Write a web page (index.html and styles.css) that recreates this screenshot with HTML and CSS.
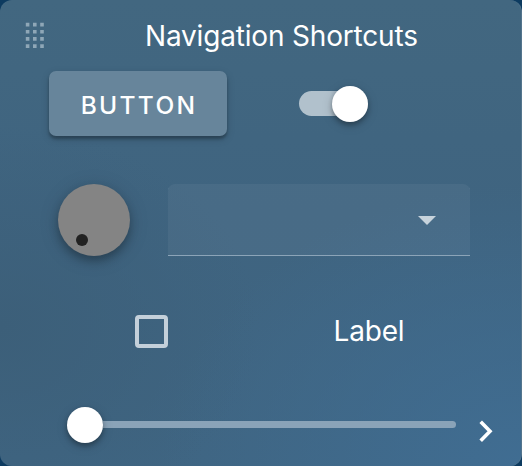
FILE: index.html
```html
<!DOCTYPE html>
<html lang="en">
<head>
<meta charset="utf-8">
<title>Navigation Shortcuts</title>
<link rel="stylesheet" href="styles.css">
</head>
<body>
<main class="card">
  <header class="header">
    <svg class="grip" width="20" height="27" viewBox="0 0 20 27" fill="currentColor">
      <path d="M.8 .8h3.6v3.6H.8zM8 .8h3.6v3.6H8zM15.2 .8h3.6v3.6h-3.6zM.8 7.9h3.6v3.6H.8zM8 7.9h3.6v3.6H8zM15.2 7.9h3.6v3.6h-3.6zM.8 15.1h3.6v3.6H.8zM8 15.1h3.6v3.6H8zM15.2 15.1h3.6v3.6h-3.6zM.8 22.3h3.6v3.6H.8zM8 22.3h3.6v3.6H8zM15.2 22.3h3.6v3.6h-3.6z"/>
    </svg>
    <h1 class="title">Navigation Shortcuts</h1>
  </header>
  <section class="row actions">
    <button class="button" type="button">BUTTON</button>
    <div class="switch"><span class="thumb"></span></div>
  </section>
  <section class="row inputs">
    <div class="knob"><span class="knob-dot"></span></div>
    <div class="select">
      <svg width="18" height="9" viewBox="0 0 18 9" fill="currentColor"><path d="M0 0h18L9 9z"/></svg>
    </div>
  </section>
  <section class="row options">
    <span class="checkbox"></span>
    <span class="label">Label</span>
  </section>
  <section class="row range">
    <div class="slider"><span class="thumb"></span><span class="track"></span></div>
    <svg class="chevron" width="14" height="23" viewBox="0 0 14 23" fill="none" stroke="currentColor" stroke-width="3.6"><path d="M1.7 1.7l9.3 9.5-9.3 9.5"/></svg>
  </section>
</main>
</body>
</html>
```
FILE: styles.css
```css
* { box-sizing: border-box; }
body {
  margin: 0;
  background: #0d3b60;
  color: #fff;
  font-family: Inter, "Liberation Sans", sans-serif;
}
.card {
  width: 522px;
  height: 466px;
  overflow: hidden;
  border-radius: 12px;
  border-right: 1px solid #54758d;
  background:
    radial-gradient(ellipse 360px 280px at 100% 100%, #406d92 0%, rgba(64, 109, 146, 0) 100%),
    radial-gradient(ellipse 260px 200px at 0 70%, #3c5f79 0%, rgba(60, 95, 121, 0) 100%),
    linear-gradient(#426780, #3f6480 45%, #3f6582);
}
.header {
  display: flex;
  align-items: flex-start;
  height: 71px;
  padding: 22px 0 0 25px;
}
.grip { color: #8fa7b7; }
.title {
  margin: -4px 0 0 100px;
  font-size: 28px;
  font-weight: 400;
  line-height: 36px;
  letter-spacing: -.18px;
  white-space: nowrap;
}
.row { display: flex; align-items: center; }
.actions { height: 65px; padding-left: 49px; gap: 72px; }
.button {
  width: 178px;
  height: 65px;
  padding: 2px 0 0 2px;
  border: 0;
  border-radius: 7px;
  background: #67859b;
  color: #fff;
  font: 500 24.5px/30px Inter, sans-serif;
  letter-spacing: 2.3px;
  box-shadow: 0 3px 3px rgba(0, 0, 0, .25), 0 3px 8px rgba(0, 0, 0, .16);
}
.switch {
  display: flex;
  align-items: center;
  justify-content: flex-end;
  width: 69px;
  height: 25px;
  border-radius: 13px;
  background: linear-gradient(90deg, #b1c1cc 45%, #96a8b6 60%);
}
.thumb {
  flex: none;
  width: 36px;
  height: 36px;
  border-radius: 50%;
  background: #fff;
  box-shadow: 0 3px 5px rgba(0, 0, 0, .28), 0 3px 12px rgba(0, 0, 0, .15);
}
.switch .thumb { margin-top: 1px; }
.inputs { height: 72px; margin-top: 48px; padding-left: 58px; gap: 38px; }
.knob {
  width: 72px;
  height: 72px;
  padding: 50px 0 0 18px;
  border-radius: 50%;
  background: #848484;
  box-shadow: 0 5px 8px rgba(0, 0, 0, .25), 0 3px 20px rgba(0, 0, 0, .15);
}
.knob-dot {
  display: block;
  width: 12px;
  height: 12px;
  border-radius: 50%;
  background: #222;
}
.select {
  display: flex;
  align-items: center;
  justify-content: flex-end;
  width: 302px;
  height: 72px;
  padding-right: 34px;
  padding-top: 1px;
  border-radius: 7px 7px 0 0;
  background: rgba(255, 255, 255, .05);
  box-shadow: inset 0 -1px #8ca4b8;
  color: #c7d3dc;
}
.options { height: 34px; margin-top: 58px; padding-left: 134px; }
.checkbox {
  width: 33px;
  height: 33px;
  margin-left: .5px;
  border: 4px solid #c4d0da;
  border-radius: 4px;
}
.label { margin-left: 166px; font-size: 28px; line-height: 34px; letter-spacing: -.18px; }
.range { height: 36px; margin-top: 59px; padding-left: 67px; gap: 23px; }
.slider { display: flex; align-items: center; width: 389px; }
.track {
  flex: 1;
  height: 7px;
  margin-bottom: 1px;
  border-radius: 0 4px 4px 0;
  background: #8aa3b8;
}
.slider .thumb { position: relative; }
.chevron { margin-top: 13px; margin-left: -.5px; }
```
